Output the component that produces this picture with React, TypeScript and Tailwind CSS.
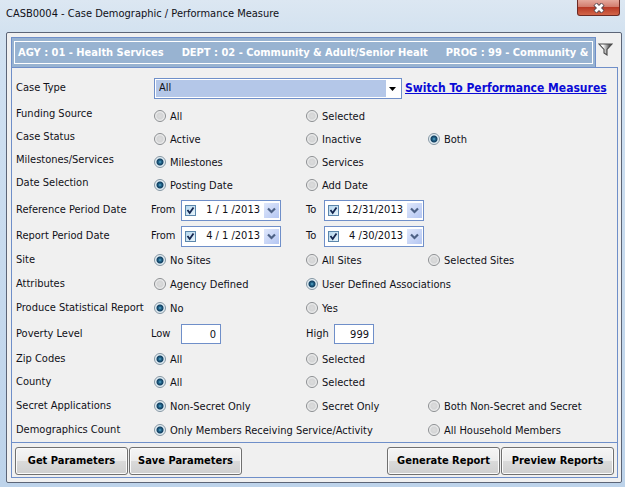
import React from "react";

const RADIO =
  "size-3 shrink-0 appearance-none rounded-full border border-[#8b8e91] bg-[radial-gradient(circle,#dcdcdc_0%,#d4d5d6_40%,#f6f6f6_75%)] checked:border-[#8496a3] checked:bg-[radial-gradient(circle_at_center,#5fb0d0_0px,#22648a_1.5px,#123f60_3px,#dcebf3_4px,#e8eff3_5px)]";

type Option = { text: string; checked?: boolean; wide?: boolean };

function Radio({ name, option }: { name: string; option: Option }) {
  return (
    <label className="flex items-center gap-1 whitespace-nowrap">
      <input type="radio" name={name} defaultChecked={option.checked} className={RADIO} />
      <span className="pt-0.5">{option.text}</span>
    </label>
  );
}

const GRID = "grid grid-cols-[135px_155px_122px_1fr] items-center";

function RadioRow({
  label,
  options,
  height,
  raised,
}: {
  label: string;
  options: Option[];
  height: string;
  raised?: boolean;
}) {
  return (
    <div role="radiogroup" aria-label={label} className={`${GRID} ${height}`}>
      <span className={`whitespace-nowrap ${raised ? "pb-1" : ""}`}>{label}</span>
      {options.map((o, i) => (
        <div key={o.text} className={`${i === 0 ? "pl-[3px]" : ""} ${o.wide ? "col-span-2" : ""}`}>
          <Radio name={label} option={o} />
        </div>
      ))}
    </div>
  );
}

function DateBox({ label, value }: { label: string; value: string }) {
  return (
    <div className="flex h-[21px] w-[100px] items-center border border-[#6f8fc9] bg-white pl-[3px]">
      <input
        type="checkbox"
        defaultChecked
        aria-label={`Use ${label}`}
        className="size-[11px] shrink-0 appearance-none border border-[#5b86ab] bg-[#c4e0f3] bg-[linear-gradient(135deg,#b5d7ee,#e8f4fb)]"
      />
      <svg viewBox="0 0 11 11" className="pointer-events-none -ml-[11px] size-[11px] shrink-0" aria-hidden="true">
        <path d="M2.5 5 L4.7 8 L8.5 2.5" fill="none" stroke="#14264f" strokeWidth="1.8" />
      </svg>
      <input
        type="text"
        aria-label={label}
        defaultValue={value}
        className="min-w-0 flex-1 bg-transparent pr-1 text-right outline-none"
      />
      <button
        type="button"
        aria-label={`Open ${label} calendar`}
        className="flex h-[15px] w-[15px] shrink-0 items-center justify-center bg-[linear-gradient(135deg,#dfe7fb,#b4c6f2)]"
      >
        <svg viewBox="0 0 9 7" className="h-[7px] w-[9px]" aria-hidden="true">
          <path d="M1 1.5 L4.5 5 L8 1.5" fill="none" stroke="#4d6185" strokeWidth="2.2" />
        </svg>
      </button>
      <span className="w-px" />
    </div>
  );
}

function DateRow({ label, from, to, height }: { label: string; from: string; to: string; height: string }) {
  return (
    <div className={`${GRID} ${height}`}>
      <span className="whitespace-nowrap">{label}</span>
      <div className="flex items-center">
        <span className="w-[30px]">From</span>
        <DateBox label={`${label} from`} value={from} />
      </div>
      <div className="flex items-center">
        <span className="w-[18px]">To</span>
        <DateBox label={`${label} to`} value={to} />
      </div>
    </div>
  );
}

function ActionButton({ children }: { children: React.ReactNode }) {
  return (
    <button
      type="button"
      className="h-7 w-[113px] rounded-[3px] border border-[#707070] bg-[linear-gradient(#f5f5f5,#ececec_48%,#dadada_52%,#cfcfcf)] text-[11px] font-bold whitespace-nowrap text-black shadow-[inset_0_0_0_1px_#fbfbfb]"
    >
      {children}
    </button>
  );
}

export default function App() {
  return (
    <div className="flex min-h-screen flex-col bg-[linear-gradient(#dce7f2,#d3e2f0_32px,#cfe0f1_80px,#bdd3ea)] pr-[3px] pb-1 pl-1.5 font-['DejaVu_Sans_Condensed','DejaVu_Sans',sans-serif] text-[11px] leading-[14px] text-[#101018]">
      <header className="flex h-8 items-start justify-between">
        <h1 className="pt-[7px] text-[11px] whitespace-nowrap">CASB0004 - Case Demographic / Performance Measure</h1>
        <button
          type="button"
          aria-label="Close"
          className="mr-0.5 flex h-4 w-[43px] items-center justify-center rounded-b-[3px] border border-t-0 border-[#6b2a24] bg-[linear-gradient(#e5a99c,#d27d6e_45%,#b83a26_50%,#d2664a)]"
        >
          <svg viewBox="0 0 12 10" className="h-[10px] w-3" aria-hidden="true">
            <path d="M2 1 L10 9 M10 1 L2 9" stroke="#5d4a50" strokeWidth="4.6" />
            <path d="M2.5 1.5 L9.5 8.5 M9.5 1.5 L2.5 8.5" stroke="#ffffff" strokeWidth="2.8" />
          </svg>
        </button>
      </header>

      <main className="flex flex-1 flex-col rounded-[2px] border border-[#5c6577] bg-[#f0f0f0] pt-1 pr-[3px] pb-1 pl-1">
        <div className="flex items-start">
          <div className="min-w-0 flex-1 border border-b-0 border-[#6f8fc9] bg-[#98b3d1] px-0.5 py-[3px]">
            <div className="flex h-[23px] items-center gap-[18px] overflow-hidden border border-white pl-[3px] font-bold whitespace-pre text-white">
              <span>AGY : 01 - Health Services</span>
              <span>DEPT : 02 - Community &amp; Adult/Senior Healt</span>
              <span>PROG : 99 - Community &amp;</span>
            </div>
          </div>
          <button type="button" aria-label="Filter" className="mr-[5px] ml-0.5 pt-1.5">
            <svg viewBox="0 0 15 13" className="h-[13px] w-[15px]" aria-hidden="true">
              <defs>
                <linearGradient id="funnel" x1="0" x2="1">
                  <stop offset="0.3" stopColor="#ffffff" />
                  <stop offset="0.8" stopColor="#5a5a5a" />
                </linearGradient>
              </defs>
              <path d="M1 1 H14 L9 6.5 V12 L6 10 V6.5 Z" fill="url(#funnel)" stroke="#4a4a4a" strokeWidth="1.1" />
            </svg>
          </button>
        </div>

        <form className="flex flex-1 flex-col border border-[#6f8fc9]" onSubmit={(e) => e.preventDefault()}>
          <div className="flex-1 pl-1">
            <div className="flex h-9 items-center pt-1">
              <label htmlFor="case-type" className="w-[138px] shrink-0">
                Case Type
              </label>
              <div className="relative h-[21px] w-[248px] shrink-0 border border-[#6f8fc9] bg-white p-px">
                <select
                  id="case-type"
                  className="block h-full w-full appearance-none bg-[linear-gradient(to_right,#b4c7e8_230px,#ffffff_230px)] pl-[3px] outline-none"
                >
                  <option>All</option>
                </select>
                <svg viewBox="0 0 7 4" className="pointer-events-none absolute top-2 right-[5px] h-1 w-[7px]" aria-hidden="true">
                  <path d="M0 0 H7 L3.5 4 Z" fill="#000000" />
                </svg>
              </div>
              <a href="#performance" className="ml-[3px] text-[12px] leading-4 font-bold whitespace-nowrap text-[#0a0ad6] underline">
                Switch To Performance Measures
              </a>
            </div>

            <RadioRow raised height="h-6" label="Funding Source" options={[{ text: "All" }, { text: "Selected" }]} />
            <RadioRow
              raised
              height="h-[22px]"
              label="Case Status"
              options={[{ text: "Active" }, { text: "Inactive" }, { text: "Both", checked: true }]}
            />
            <RadioRow
              raised
              height="h-6"
              label="Milestones/Services"
              options={[{ text: "Milestones", checked: true }, { text: "Services" }]}
            />
            <RadioRow
              raised
              height="h-[22px]"
              label="Date Selection"
              options={[{ text: "Posting Date", checked: true }, { text: "Add Date" }]}
            />
            <DateRow height="h-7" label="Reference Period Date" from="1 / 1 /2013" to="12/31/2013" />
            <DateRow height="h-6" label="Report Period Date" from="4 / 1 /2013" to="4 /30/2013" />
            <RadioRow
              height="h-6"
              label="Site"
              options={[{ text: "No Sites", checked: true }, { text: "All Sites" }, { text: "Selected Sites" }]}
            />
            <RadioRow
              height="h-6"
              label="Attributes"
              options={[{ text: "Agency Defined" }, { text: "User Defined Associations", checked: true }]}
            />
            <RadioRow
              height="h-6"
              label="Produce Statistical Report"
              options={[{ text: "No", checked: true }, { text: "Yes" }]}
            />
            <div className={`${GRID} h-7`}>
              <span>Poverty Level</span>
              <div className="flex items-center">
                <label htmlFor="low" className="w-[30px]">
                  Low
                </label>
                <input
                  id="low"
                  defaultValue="0"
                  className="h-5 w-10 border border-[#6f8fc9] bg-white pr-1 text-right outline-none"
                />
              </div>
              <div className="flex items-center">
                <label htmlFor="high" className="w-7">
                  High
                </label>
                <input
                  id="high"
                  defaultValue="999"
                  className="h-5 w-10 border border-[#6f8fc9] bg-white pr-1 text-right outline-none"
                />
              </div>
            </div>
            <RadioRow height="h-[22px]" label="Zip Codes" options={[{ text: "All", checked: true }, { text: "Selected" }]} />
            <RadioRow height="h-6" label="County" options={[{ text: "All", checked: true }, { text: "Selected" }]} />
            <RadioRow
              height="h-6"
              label="Secret Applications"
              options={[
                { text: "Non-Secret Only", checked: true },
                { text: "Secret Only" },
                { text: "Both Non-Secret and Secret" },
              ]}
            />
            <RadioRow
              height="h-6"
              label="Demographics Count"
              options={[
                { text: "Only Members Receiving Service/Activity", checked: true, wide: true },
                { text: "All Household Members" },
              ]}
            />
          </div>

          <footer className="flex items-center justify-between border-t border-[#6f8fc9] px-[3px] pt-1 pb-0.5">
            <div className="flex gap-px">
              <ActionButton>Get Parameters</ActionButton>
              <ActionButton>Save Parameters</ActionButton>
            </div>
            <div className="flex gap-px">
              <ActionButton>Generate Report</ActionButton>
              <ActionButton>Preview Reports</ActionButton>
            </div>
          </footer>
        </form>
      </main>
    </div>
  );
}
